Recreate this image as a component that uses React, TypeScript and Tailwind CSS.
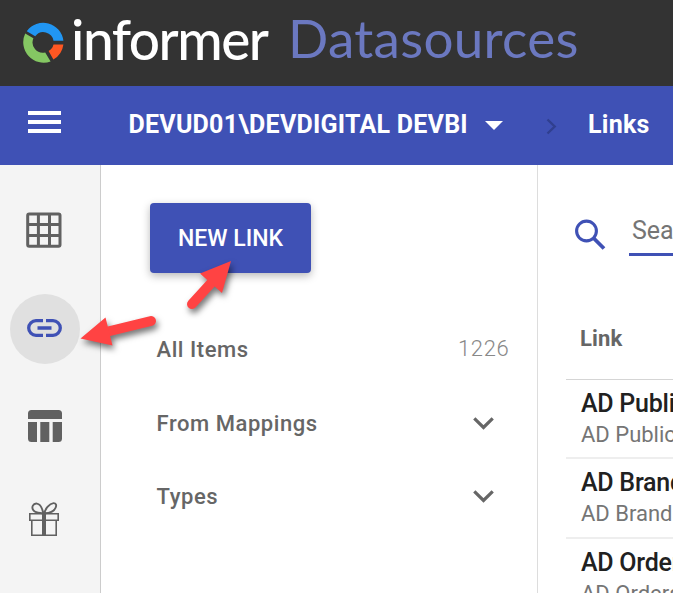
import React from "react";

function InformerMark() {
  return (
    <svg className="block h-[42px] w-[42px] shrink-0" viewBox="0 0 42 42" fill="none">
      <path d="M4.8 10.2A20.3 20.3 0 0 1 41.4 19.8H31.5A10.2 10.2 0 0 0 13.2 15.3Z" fill="#2196f3" />
      <path d="M3.2 12.5L11.4 17.3A10.3 10.3 0 0 0 23.2 31.4L28.6 40.4A20.4 20.4 0 0 1 3.2 12.5Z" fill="#85c763" />
      <path d="M31.5 23.4H41.4A20.3 20.3 0 0 1 31.4 38.4L26.6 30A10.2 10.2 0 0 0 31.5 23.4Z" fill="#ff5722" />
    </svg>
  );
}

function Header() {
  return (
    <header className="flex h-[86px] shrink-0 items-start overflow-hidden bg-[#333333] pl-[22px] pt-[21px] font-['Lato',sans-serif] leading-[60px] whitespace-nowrap">
      <InformerMark />
      <span className="-mt-[12px] ml-[7px] w-[217px] shrink-0 text-[55px] font-medium tracking-[-1.5px] text-white">informer</span>
      <span className="-mt-[13px] text-[53px] font-normal tracking-[0.3px] text-[#6b78c0]">Datasources</span>
    </header>
  );
}

function Breadcrumb() {
  return (
    <nav className="flex h-[79px] shrink-0 items-center bg-[#3f51b5] pl-7 text-[25px] leading-8 font-bold whitespace-nowrap text-white">
      <svg className="mb-[7px] h-[22px] w-[33px] shrink-0" viewBox="0 0 33 22" fill="currentColor">
        <path d="M0 0H33V4H0ZM0 9H33V13H0ZM0 18H33V22H0Z" />
      </svg>
      <span className="mb-[2px] ml-[67.5px] w-[356.5px] shrink-0 tracking-[0.25px]">DEVUD01\DEVDIGITAL DEVBI</span>
      <svg className="h-[9px] w-[18px] shrink-0" viewBox="0 0 18 9" fill="currentColor">
        <path d="M0 0H18L9 9Z" />
      </svg>
      <svg className="ml-[43px] mt-px h-[17px] w-[11px] shrink-0 text-[#303f8f]" viewBox="0 0 11 17" fill="none" stroke="currentColor" strokeWidth="2.4">
        <path d="M1.5 1.5L8.7 8.5L1.5 15.5" />
      </svg>
      <span className="mb-[2px] ml-[31px] tracking-[0.25px]">Links</span>
    </nav>
  );
}

function Sidebar() {
  return (
    <aside className="flex w-[101px] shrink-0 flex-col border-r border-[#cccccc] bg-[#f4f4f4] text-[#616161]">
      <svg className="ml-[26px] mt-[47px] h-9 w-[36px] shrink-0" viewBox="0 0 36 36" fill="none" stroke="currentColor" strokeWidth="3">
        <rect x="1.7" y="1.9" width="32.3" height="32.3" rx="1.5" />
        <path d="M12.4 1.5V34M23.5 1.5V34M1.5 12.4H34M1.5 23.5H34" />
      </svg>
      <div className="ml-[10px] mt-[46px] flex h-[70px] w-[70px] shrink-0 items-center justify-center rounded-full bg-[#e0e0e0] text-[#3f51b5]">
        <svg className="mb-[2px] mr-[2px] h-[18px] w-[35px]" viewBox="0 0 35 18" fill="none" stroke="currentColor" strokeWidth="3.3">
          <path d="M16 1.7H9A7.3 7.3 0 0 0 9 16.3H16M19 1.7H26A7.3 7.3 0 0 1 26 16.3H19M10.5 9H24.5" />
        </svg>
      </div>
      <svg className="ml-7 mt-[46px] h-8 w-[34px] shrink-0" viewBox="0 0 34 32" fill="currentColor">
        <path d="M0 9V3.5Q0 0 3.5 0H30.5Q34 0 34 3.5V9ZM0 12H9V32H3.5Q0 32 0 28.5ZM12.3 12H21.3V32H12.3ZM24.7 12H34V28.5Q34 32 30.5 32H24.7Z" />
      </svg>
      <svg className="ml-[29px] mt-[60px] h-[34px] w-[30px] shrink-0" viewBox="0 0 30 34" fill="none" stroke="currentColor" strokeWidth="1.6">
        <path d="M.8 11.8H29.2V18.3H.8ZM2.8 18.3V33.2H27.2V18.3" />
        <path d="M15 11.5V33.5" strokeWidth="4" />
        <path d="M13.7 11.3C11.5 10.7 7 11.4 4.7 8.7C1.8 5.2 4.3 1.2 7.9 1.6C11.9 2.1 13.6 7.8 14.3 11.3M15.5 11.3C15.8 7.6 20.2 1.5 24.5 1.1C27 1 27.7 3.1 26.7 5.5C25 9.6 20 11.1 16 11.3" strokeWidth="1.9" />
      </svg>
    </aside>
  );
}

function Chevron() {
  return (
    <svg className="mb-[2px] mr-[43.5px] h-[13px] w-[21px]" viewBox="0 0 21 13" fill="none" stroke="currentColor" strokeWidth="3.2">
      <path d="M1.3 1.3L10.5 10.4L19.7 1.3" />
    </svg>
  );
}

function FilterPanel() {
  return (
    <section className="flex w-[437px] shrink-0 flex-col border-r border-[#dddddd] text-[22px] leading-8 font-medium tracking-[0.55px] text-[#666666]">
      <button className="ml-[49px] mt-[38px] h-[70px] w-[161px] shrink-0 rounded bg-[#3f51b5] pt-[2px] text-[23px] font-medium tracking-[0px] text-white shadow-[0_3px_8px_rgba(0,0,0,0.28)]">NEW LINK</button>
      <div className="ml-[55.5px] mt-[61px] flex h-8 items-center justify-between">
        <span>All Items</span>
        <span className="mb-[2px] mr-[27.5px] font-light tracking-[0.7px] text-[#888888]">1226</span>
      </div>
      <div className="ml-[55.5px] mt-[42px] flex h-8 items-center justify-between">
        <span>From Mappings</span>
        <Chevron />
      </div>
      <div className="ml-[55.5px] mt-[41px] flex h-8 items-center justify-between">
        <span>Types</span>
        <Chevron />
      </div>
    </section>
  );
}

const links = ["AD Publication", "AD Brands", "AD Orders"];

function LinkList() {
  return (
    <main className="min-w-0 flex-1 overflow-hidden pl-7 whitespace-nowrap">
      <div className="flex h-[91px] items-end">
        <svg className="mb-[6px] ml-[9px] h-[31px] w-[31px] shrink-0 text-[#3f51b5]" viewBox="0 0 31 31" fill="none" stroke="currentColor">
          <circle cx="11.5" cy="12" r="9.9" strokeWidth="3.1" />
          <path d="M18.5 19L29 29.5" strokeWidth="3.8" />
        </svg>
        <div className="ml-[23px] h-[39px] w-[200px] shrink-0 border-b-[3px] border-[#3f51b5] pl-[3px] text-[25px] leading-7 text-[#757575]">Search</div>
      </div>
      <div className="h-[124px] border-b border-[#d5d5d5] pl-[14px] pt-[67px] text-[22px] leading-8 font-bold tracking-[0.15px] text-[#666666]">Link</div>
      {links.map((name) => (
        <div key={name} className="h-[79.3px] border-b-2 border-[#eeeeee] pl-[15px] pt-2">
          <div className="text-[25px] leading-8 font-medium tracking-[-0.25px] text-[#212121]">{name}</div>
          <div className="text-[22px] leading-[30px] text-[#757575]">{name}</div>
        </div>
      ))}
    </main>
  );
}

function Arrows() {
  return (
    <svg className="pointer-events-none absolute left-[70px] top-[250px] h-[110px] w-[180px] overflow-visible drop-shadow-[2px_4px_3px_rgba(0,0,0,0.55)]" viewBox="70 250 180 110">
      <g fill="#ff4343" stroke="#ff4343">
        <path d="M151 321L108 331.5M192 304L213 281" strokeWidth="10" strokeLinecap="round" />
        <path d="M80.5 338.5L105.5 317.5L112.5 345.5ZM231 261L200 273.5L222 293Z" stroke="none" />
      </g>
    </svg>
  );
}

export default function App() {
  return (
    <div className="relative flex h-[593px] w-[673px] flex-col overflow-hidden bg-white font-['Roboto',sans-serif]">
      <Header />
      <Breadcrumb />
      <div className="flex min-h-0 flex-1">
        <Sidebar />
        <FilterPanel />
        <LinkList />
      </div>
      <Arrows />
    </div>
  );
}
